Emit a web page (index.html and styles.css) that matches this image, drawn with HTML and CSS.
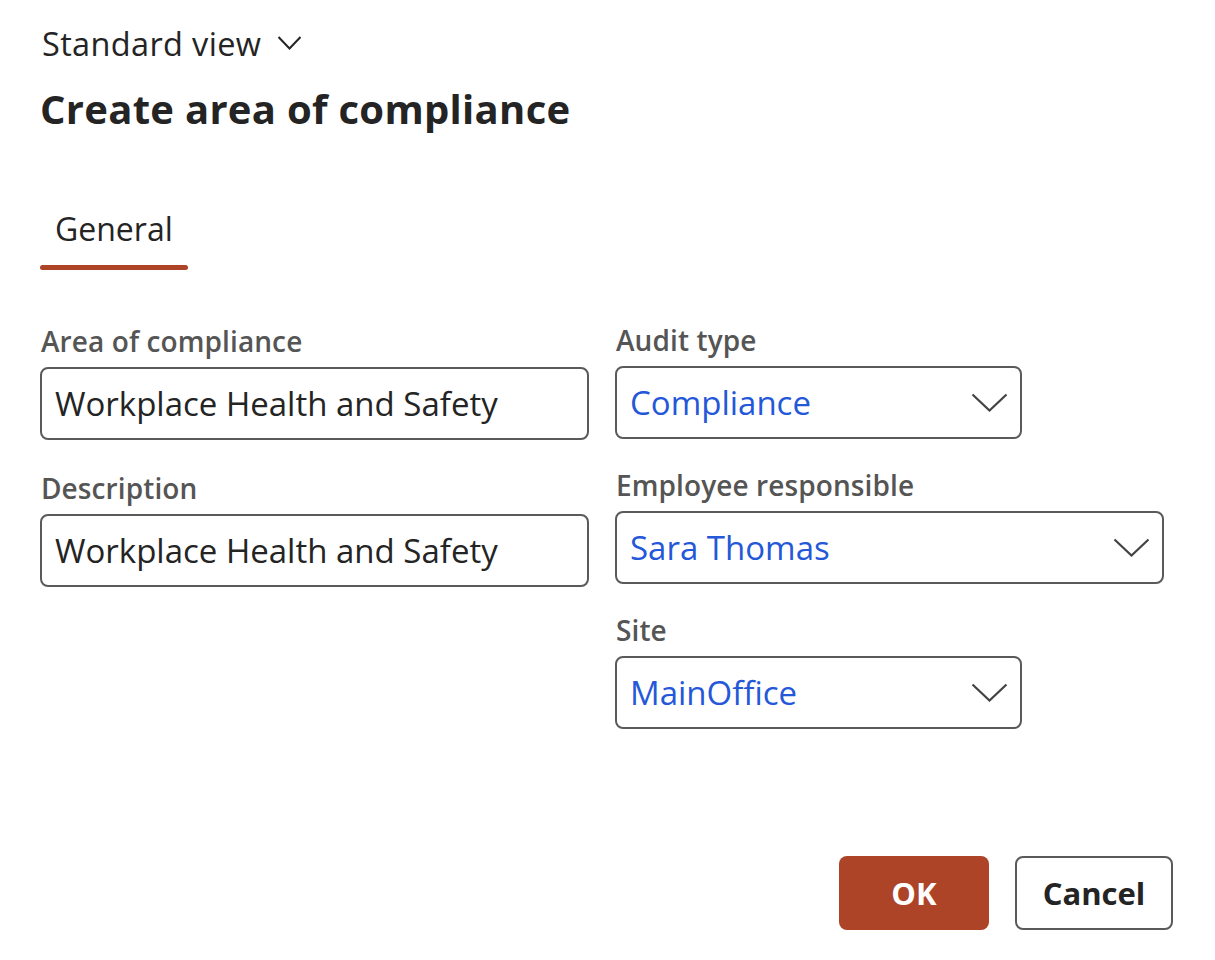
FILE: index.html
```html
<!DOCTYPE html>
<html lang="en">
<head>
<meta charset="utf-8">
<title>Create area of compliance</title>
<link rel="stylesheet" href="styles.css">
</head>
<body>
<div class="dialog">
  <div class="view-switch">
    <span>Standard view</span>
    <svg class="view-chev" width="25" height="16" viewBox="0 0 25 16"><path d="M1.5 2 L12.5 13.5 L23.5 2" fill="none" stroke="#242424" stroke-width="2"/></svg>
  </div>
  <h1 class="title">Create area of compliance</h1>

  <div class="tabs">
    <div class="tab active">General</div>
  </div>

  <div class="form">
    <div class="col col-left">
      <div class="field">
        <label class="label">Area of compliance</label>
        <div class="input wide"><span class="value">Workplace Health and Safety</span></div>
      </div>
      <div class="field">
        <label class="label">Description</label>
        <div class="input wide"><span class="value">Workplace Health and Safety</span></div>
      </div>
    </div>
    <div class="col col-right">
      <div class="field">
        <label class="label">Audit type</label>
        <div class="input select short"><span class="value link">Compliance</span>
          <svg class="chev" width="37" height="19" viewBox="0 0 37 19"><path d="M1.5 1.5 L18.5 17.5 L35.5 1.5" fill="none" stroke="#424242" stroke-width="2.2"/></svg>
        </div>
      </div>
      <div class="field">
        <label class="label">Employee responsible</label>
        <div class="input select wide"><span class="value link">Sara Thomas</span>
          <svg class="chev" width="37" height="19" viewBox="0 0 37 19"><path d="M1.5 1.5 L18.5 17.5 L35.5 1.5" fill="none" stroke="#424242" stroke-width="2.2"/></svg>
        </div>
      </div>
      <div class="field">
        <label class="label">Site</label>
        <div class="input select short"><span class="value link">MainOffice</span>
          <svg class="chev" width="37" height="19" viewBox="0 0 37 19"><path d="M1.5 1.5 L18.5 17.5 L35.5 1.5" fill="none" stroke="#424242" stroke-width="2.2"/></svg>
        </div>
      </div>
    </div>
  </div>

  <div class="actions">
    <button class="btn primary">OK</button>
    <button class="btn secondary">Cancel</button>
  </div>
</div>
</body>
</html>
```

FILE: styles.css
```css
* { box-sizing: border-box; }
html, body { margin: 0; padding: 0; background: #ffffff; }
body {
  font-family: "Open Sans", "Noto Sans", "Liberation Sans", sans-serif;
  color: #242424;
  width: 1215px;
  height: 960px;
  overflow: hidden;
}
.dialog {
  padding: 24px 42px 0 40px;
  display: flex;
  flex-direction: column;
}
.view-switch {
  display: flex;
  align-items: center;
  gap: 16px;
  font-size: 32.5px;
  line-height: 40px;
  padding-left: 2px;
  letter-spacing: 0.35px;
}
.view-chev { margin-top: -2px; }
.title {
  margin: 21px 0 0 0;
  font-size: 40px;
  line-height: 48px;
  font-weight: 700;
  letter-spacing: 0.3px;
}
.tabs {
  display: flex;
  margin-top: 76px;
}
.tab {
  font-size: 32px;
  line-height: 40px;
  padding: 0 15px 0 15px;
  letter-spacing: 0;
  position: relative;
  height: 60px;
}
.tab.active::after {
  content: "";
  position: absolute;
  left: 0;
  right: 0;
  bottom: -1px;
  height: 5px;
  border-radius: 3px;
  background: #ad4427;
}
.form {
  display: flex;
  gap: 26px;
  margin-top: 54px;
}
.col {
  width: 549px;
  display: flex;
  flex-direction: column;
}
.col-left { gap: 30px; }
.col-right { gap: 28px; margin-top: -1px; }
.field { display: flex; flex-direction: column; gap: 8px; }
.label {
  font-size: 28px;
  line-height: 36px;
  font-weight: 600;
  color: #555555;
  letter-spacing: 0.1px;
  padding-left: 1px;
}
.input {
  height: 73px;
  border: 2px solid #5a5a5a;
  border-radius: 8px;
  display: flex;
  align-items: center;
  padding: 0 12px 0 13px;
}
.input.wide { width: 549px; }
.input.short { width: 407px; }
.value {
  font-size: 33px;
  letter-spacing: 0;
  color: #242424;
  flex: 1;
  white-space: nowrap;
}
.value.link { color: #2458d8; }
.chev { flex: none; }
.actions {
  display: flex;
  justify-content: flex-end;
  gap: 26px;
  margin-top: 127px;
}
.btn {
  height: 74px;
  border-radius: 8px;
  font-family: inherit;
  font-size: 31px;
  font-weight: 700;
  cursor: pointer;
}
.btn.primary {
  width: 150px;
  background: #ad4427;
  color: #ffffff;
  border: none;
}
.btn.secondary {
  width: 158px;
  background: #ffffff;
  color: #242424;
  border: 2px solid #5a5a5a;
}
```
